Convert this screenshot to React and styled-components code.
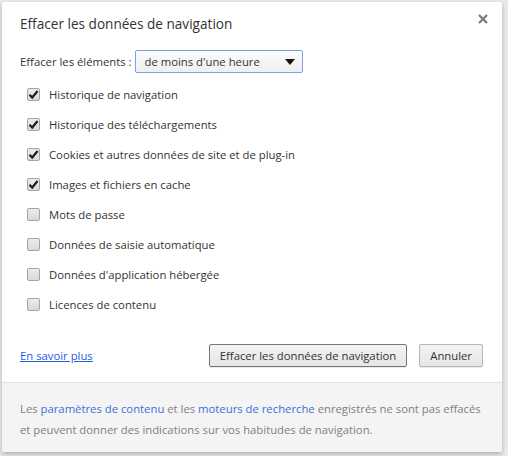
import React from 'react';
import styled, { createGlobalStyle } from 'styled-components';

const Global = createGlobalStyle`
  html, body {
    margin: 0;
    padding: 0;
    background: #e9e9e9;
  }
  body {
    font-family: "Open Sans", "Noto Sans", sans-serif;
    font-size: 11.3px;
    color: #333;
  }
`;

const Page = styled.div`
  width: 508px;
  height: 456px;
  padding: 2px 0 0 2px;
  box-sizing: border-box;
`;

const Dialog = styled.div`
  position: relative;
  width: 500px;
  background: #fff;
  border-radius: 2px;
  box-shadow: 0 2px 4px rgba(0, 0, 0, 0.25);
  overflow: hidden;
`;

const Body = styled.div`
  padding: 10px 19px 15px 18px;
`;

const Title = styled.h1`
  margin: 0;
  font-size: 13.6px;
  font-weight: normal;
  line-height: 24px;
  color: #333;
`;

const Close = styled.button`
  position: absolute;
  top: 10px;
  right: 12px;
  width: 14px;
  height: 14px;
  padding: 0;
  border: 0;
  background: none;
  display: flex;
  align-items: center;
  justify-content: center;
`;

const RangeRow = styled.div`
  display: flex;
  align-items: center;
  gap: 3px;
  margin-top: 14px;
  height: 23px;
`;

const Select = styled.div`
  width: 168px;
  height: 23px;
  box-sizing: border-box;
  border: 1px solid #78a2e2;
  border-radius: 2px;
  background: linear-gradient(#fbfbfb, #f0f0f0);
  display: flex;
  align-items: center;
  justify-content: space-between;
  padding: 0 7px 0 9px;
  color: #333;
`;

const Arrow = styled.span`
  width: 0;
  height: 0;
  border-left: 5px solid transparent;
  border-right: 5px solid transparent;
  border-top: 6px solid #111;
`;

const List = styled.div`
  margin-top: 6px;
  padding-left: 7px;
`;

const Option = styled.label`
  display: flex;
  align-items: center;
  gap: 9px;
  height: 30px;
`;

const Box = styled.span`
  width: 13px;
  height: 13px;
  box-sizing: border-box;
  border: 1px solid #a4a4a4;
  border-radius: 2px;
  background: linear-gradient(#ececec, #d9d9d9);
  display: flex;
  align-items: center;
  justify-content: center;
`;

const Actions = styled.div`
  display: flex;
  align-items: center;
  gap: 12px;
  margin-top: 25px;
`;

const Link = styled.a`
  color: #1f5ce0;
  text-decoration: underline;
  margin-right: auto;
  cursor: pointer;
`;

const Button = styled.button`
  height: 23px;
  padding: 0 10px;
  font-family: inherit;
  font-size: 11.3px;
  color: #333;
  border: 1px solid ${(p) => (p.$focused ? '#777' : '#b5b5b5')};
  border-radius: 2px;
  background: linear-gradient(#f3f3f3, #e6e6e6);
  box-shadow: 0 1px 0 rgba(0, 0, 0, 0.08);
`;

const Footer = styled.div`
  border-top: 1px solid #e2e2e2;
  background: #f4f4f4;
  padding: 15px 18px 12px 18px;
  line-height: 21px;
  color: #808080;
`;

const FooterLink = styled.span`
  color: #3d6fd9;
`;

const items = [
  ['Historique de navigation', true],
  ['Historique des téléchargements', true],
  ['Cookies et autres données de site et de plug-in', true],
  ['Images et fichiers en cache', true],
  ['Mots de passe', false],
  ['Données de saisie automatique', false],
  ["Données d'application hébergée", false],
  ['Licences de contenu', false],
];

const Check = () => (
  <svg width="11" height="11" viewBox="0 0 11 11">
    <path d="M1.5 5.8 L4.2 8.5 L9.6 2" fill="none" stroke="#1e1e1e" strokeWidth="2.2" />
  </svg>
);

export default function App() {
  return (
    <Page>
      <Global />
      <Dialog>
        <Close aria-label="Fermer">
          <svg width="10" height="10" viewBox="0 0 10 10">
            <path d="M1 1 L9 9 M9 1 L1 9" stroke="#7a7a7a" strokeWidth="2.2" />
          </svg>
        </Close>
        <Body>
          <Title>Effacer les données de navigation</Title>
          <RangeRow>
            <span>Effacer les éléments :</span>
            <Select>
              <span>de moins d'une heure</span>
              <Arrow />
            </Select>
          </RangeRow>
          <List>
            {items.map(([label, checked]) => (
              <Option key={label}>
                <Box>{checked && <Check />}</Box>
                <span>{label}</span>
              </Option>
            ))}
          </List>
          <Actions>
            <Link>En savoir plus</Link>
            <Button $focused>Effacer les données de navigation</Button>
            <Button>Annuler</Button>
          </Actions>
        </Body>
        <Footer>
          Les <FooterLink>paramètres de contenu</FooterLink> et les{' '}
          <FooterLink>moteurs de recherche</FooterLink> enregistrés ne sont pas effacés
          et peuvent donner des indications sur vos habitudes de navigation.
        </Footer>
      </Dialog>
    </Page>
  );
}
